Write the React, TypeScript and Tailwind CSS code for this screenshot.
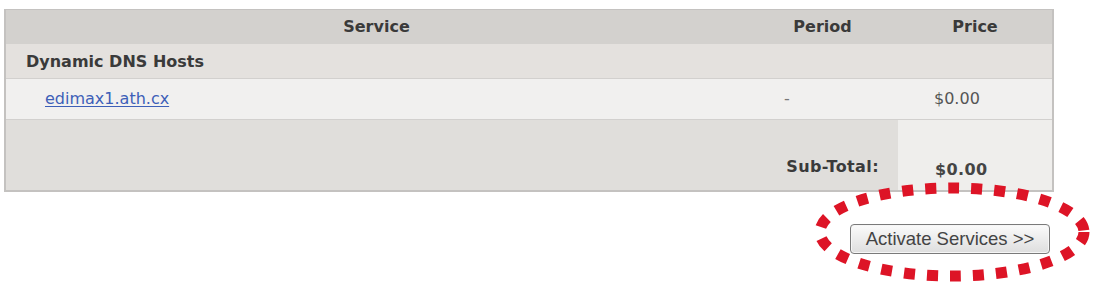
import React from 'react';

const cell = "font-['DejaVu_Sans',sans-serif] text-[16px] text-[#3a3a3a]";

const App: React.FC = () => {
    return (
        <div className="relative w-[1095px] h-[290px] bg-white overflow-hidden">
            <div className="pt-[9px] pl-[4px]">
                <table className="w-[1050px] border-collapse border-l-2 border-r-2 border-b-2 border-t border-[#c4c2c0] table-fixed">
                    <colgroup>
                        <col className="w-[756px]" />
                        <col className="w-[137px]" />
                        <col />
                    </colgroup>
                    <thead>
                        <tr className="h-[34px] bg-[#d3d1ce]">
                            <th className={`${cell} font-bold pr-[14px]`}>Service</th>
                            <th className={`${cell} font-bold text-center pr-[14px]`}>Period</th>
                            <th className={`${cell} font-bold text-center`}>Price</th>
                        </tr>
                    </thead>
                    <tbody>
                        <tr className="h-[35px] bg-[#e4e1de]">
                            <td className={`${cell} font-bold pl-[20px] pt-[2px]`} colSpan={3}>Dynamic DNS Hosts</td>
                        </tr>
                        <tr className="h-[41px] bg-[#f1f0ef] border-t border-b border-[#d2d0ce]">
                            <td className={`${cell} pl-[39px]`}>
                                <a href="#" className="text-[#3d5fb8] underline underline-offset-2">edimax1.ath.cx</a>
                            </td>
                            <td className={`${cell} pl-[23px] text-[#777]`}>-</td>
                            <td className={`${cell} pl-[36px] text-[#555]`}>$0.00</td>
                        </tr>
                        <tr className="h-[71px] bg-[#e0dedb]">
                            <td className={`${cell} font-bold text-right align-bottom pb-[11px] pr-[19px] tracking-[0.4px]`} colSpan={2}>Sub-Total:</td>
                            <td className={`${cell} font-bold align-bottom pb-[8px] pl-[37px] bg-[#efeeec] text-[#444] tracking-[0.4px]`}>$0.00</td>
                        </tr>
                    </tbody>
                </table>
            </div>
            <div className="flex justify-end w-[1050px] mt-[32px]">
                <button className="h-[30px] w-[200px] rounded-[4px] border border-[#7a7a7a] bg-gradient-to-b from-[#fbfbfb] to-[#dedede] font-['Liberation_Sans',sans-serif] text-[18.5px] text-[#444] shadow-[inset_0_0_0_1px_#f6f6f6]">
                    Activate Services &gt;&gt;
                </button>
            </div>
            <svg className="absolute left-[810px] top-[180px]" width="285" height="104" viewBox="0 0 285 104">
                <ellipse cx="142" cy="52" rx="132" ry="44" fill="none" stroke="#dd1426" strokeWidth="11" strokeDasharray="11 12" />
            </svg>
        </div>
    );
};

export default App;
